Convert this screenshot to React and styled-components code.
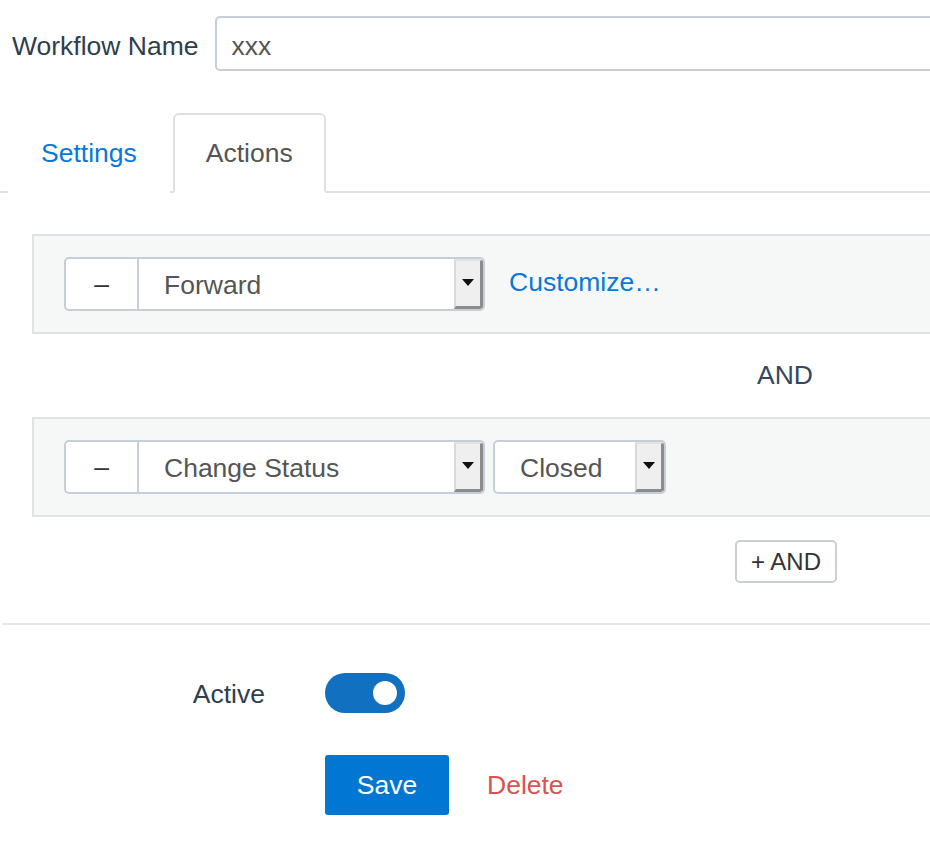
import React, { useState } from "react";
import styled, { createGlobalStyle } from "styled-components";

const GlobalStyle = createGlobalStyle`
  html, body {
    margin: 0;
    padding: 0;
    background: #ffffff;
    overflow: hidden;
  }
  body {
    font-family: "Liberation Sans", Arial, sans-serif;
    font-size: 26.5px;
    color: #34495e;
  }
`;

const Page = styled.div`
  width: 1000px;
`;

const NameRow = styled.div`
  display: flex;
  align-items: center;
  gap: 16px;
  padding: 16px 0 0 12px;
`;

const Label = styled.label`
  color: #2f3e4d;
  white-space: nowrap;
  padding-top: 5px;
`;

const TextInput = styled.input`
  flex: 1;
  height: 55px;
  box-sizing: border-box;
  border: 2px solid #c6cfd8;
  border-radius: 5px;
  padding: 5px 15px 0;
  font: inherit;
  color: #555;
  outline: none;
`;

const TabList = styled.div`
  display: flex;
  gap: 3px;
  margin-top: 42px;
  padding-left: 8px;
  border-bottom: 2px solid #e0e0e0;
  height: 78px;
`;

const Tab = styled.div`
  box-sizing: border-box;
  height: 80px;
  padding: 0 31px;
  display: flex;
  align-items: center;
  color: ${(p) => (p.$active ? "#555555" : "#0a78d6")};
  background: #fff;
  border: 2px solid ${(p) => (p.$active ? "#e0e0e0" : "transparent")};
  border-bottom-color: ${(p) => (p.$active ? "#fff" : "transparent")};
  border-radius: 6px 6px 0 0;
  cursor: pointer;
`;

const Content = styled.div`
  padding: 41px 0 0 32px;
`;

const Card = styled.div`
  box-sizing: border-box;
  height: 100px;
  background: #f6f8f8;
  border: 2px solid #dfe3e6;
  border-right: none;
  padding: 21px 0 0 30px;
  display: flex;
  align-items: flex-start;
  gap: 8px;
`;

const AndLabel = styled.div`
  height: 83px;
  display: flex;
  align-items: center;
  padding-left: 725px;
  color: #34495e;
`;

const Group = styled.div`
  display: flex;
  height: 54px;
`;

const MinusButton = styled.button`
  width: 74px;
  height: 54px;
  box-sizing: border-box;
  background: #fff;
  border: 2px solid #c6cfd8;
  border-right: 1px solid #c6cfd8;
  border-radius: 5px 0 0 5px;
  font: inherit;
  color: #333;
  padding: 0;
  cursor: pointer;
`;

const Select = styled.div`
  width: ${(p) => p.$width}px;
  height: 54px;
  box-sizing: border-box;
  display: flex;
  align-items: stretch;
  background: #fff;
  border: 2px solid #c6cfd8;
  border-left: ${(p) => (p.$joined ? "1px" : "2px")} solid #c6cfd8;
  border-radius: ${(p) => (p.$joined ? "0 5px 5px 0" : "5px")};
  color: #555;
  overflow: hidden;
`;

const SelectText = styled.span`
  flex: 1;
  display: flex;
  align-items: center;
  padding: 2px 0 0 25px;
`;

const ArrowBox = styled.span`
  width: 24px;
  box-sizing: content-box;
  background: #efefef;
  border-left: 2px solid #d9d9d9;
  border-top: 2px solid #e2e2e2;
  border-right: 3px solid #8c8c8c;
  border-bottom: 3px solid #8c8c8c;
  display: flex;
  align-items: center;
  justify-content: center;
  border-radius: 0 3px 3px 0;

  &::after {
    content: "";
    border-left: 6px solid transparent;
    border-right: 6px solid transparent;
    border-top: 7px solid #111;
    margin-top: -2px;
  }
`;

const LinkText = styled.a`
  color: #0a78d6;
  margin-left: 16px;
  height: 50px;
  display: flex;
  align-items: center;
  cursor: pointer;
`;

const AddRow = styled.div`
  padding: 23px 0 0 703px;
  height: 42px;
`;

const AddButton = styled.button`
  height: 43px;
  padding: 0 14px;
  box-sizing: border-box;
  background: #fff;
  border: 2px solid #cbced2;
  border-radius: 5px;
  font: inherit;
  font-size: 24px;
  color: #333;
  cursor: pointer;
`;

const Divider = styled.hr`
  margin: 41px 0 0 2px;
  border: none;
  border-top: 2px solid #e8e8e8;
`;

const FormRow = styled.div`
  display: flex;
  align-items: center;
  gap: 60px;
  margin-top: ${(p) => p.$top}px;
`;

const RowLabel = styled.div`
  width: 265px;
  text-align: right;
  color: #2f3e4d;
  padding-top: 2px;
`;

const Toggle = styled.button`
  width: 80px;
  height: 40px;
  border: none;
  border-radius: 20px;
  background: ${(p) => (p.$on ? "#1170c0" : "#c3c9cf")};
  padding: 0;
  position: relative;
  cursor: pointer;

  &::after {
    content: "";
    position: absolute;
    top: 8px;
    left: ${(p) => (p.$on ? "48px" : "8px")};
    width: 24px;
    height: 24px;
    border-radius: 50%;
    background: #fff;
  }
`;

const Actions = styled.div`
  display: flex;
  align-items: center;
  gap: 38px;
  margin: 42px 0 0 325px;
`;

const SaveButton = styled.button`
  width: 124px;
  height: 60px;
  border: none;
  border-radius: 3px;
  background: #0276d3;
  color: #fff;
  font: inherit;
  cursor: pointer;
`;

const DeleteLink = styled.a`
  color: #d9534f;
  cursor: pointer;
`;

const ActionSelect = ({ value, width, joined }) => (
  <Select $width={width} $joined={joined}>
    <SelectText>{value}</SelectText>
    <ArrowBox />
  </Select>
);

export default function App() {
  const [tab, setTab] = useState("actions");
  const [active, setActive] = useState(true);

  return (
    <Page>
      <GlobalStyle />
      <NameRow>
        <Label>Workflow Name</Label>
        <TextInput defaultValue="xxx" />
      </NameRow>

      <TabList>
        <Tab $active={tab === "settings"} onClick={() => setTab("settings")}>
          Settings
        </Tab>
        <Tab $active={tab === "actions"} onClick={() => setTab("actions")}>
          Actions
        </Tab>
      </TabList>

      <Content>
        <Card>
          <Group>
            <MinusButton>–</MinusButton>
            <ActionSelect value="Forward" width={347} joined />
          </Group>
          <LinkText>Customize…</LinkText>
        </Card>
        <AndLabel>AND</AndLabel>
        <Card>
          <Group>
            <MinusButton>–</MinusButton>
            <ActionSelect value="Change Status" width={347} joined />
          </Group>
          <ActionSelect value="Closed" width={173} />
        </Card>
        <AddRow>
          <AddButton>+ AND</AddButton>
        </AddRow>
      </Content>

      <Divider />

      <FormRow $top={48}>
        <RowLabel>Active</RowLabel>
        <Toggle $on={active} onClick={() => setActive(!active)} />
      </FormRow>

      <Actions>
        <SaveButton>Save</SaveButton>
        <DeleteLink>Delete</DeleteLink>
      </Actions>
    </Page>
  );
}
